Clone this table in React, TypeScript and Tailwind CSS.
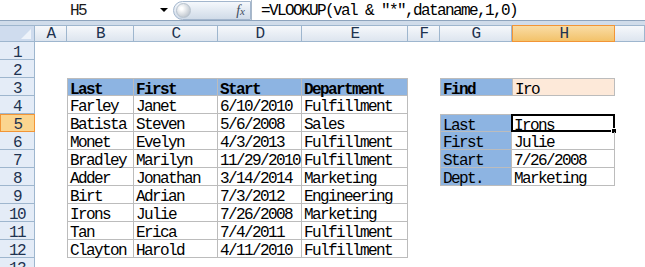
import React from 'react'

const COLS = ['A', 'B', 'C', 'D', 'E', 'F', 'G', 'H', 'I']

const people = [
  ['Farley', 'Janet', '6/10/2010', 'Fulfillment'],
  ['Batista', 'Steven', '5/6/2008', 'Sales'],
  ['Monet', 'Evelyn', '4/3/2013', 'Fulfillment'],
  ['Bradley', 'Marilyn', '11/29/2010', 'Fulfillment'],
  ['Adder', 'Jonathan', '3/14/2014', 'Marketing'],
  ['Birt', 'Adrian', '7/3/2012', 'Engineering'],
  ['Irons', 'Julie', '7/26/2008', 'Marketing'],
  ['Tan', 'Erica', '7/4/2011', 'Fulfillment'],
  ['Clayton', 'Harold', '4/11/2010', 'Fulfillment'],
]

const lookup = [
  ['Last', 'Irons'],
  ['First', 'Julie'],
  ['Start', '7/26/2008'],
  ['Dept.', 'Marketing'],
]

type Cell = { text: string; cls: string; selected?: boolean }

// col: 0 = A ... 8 = I
function cellFor(row: number, col: number): Cell {
  // data table B3:E12
  if (row >= 3 && row <= 12 && col >= 1 && col <= 4) {
    let cls = 'border-r border-b border-[#bcbcbc]'
    if (row === 3) cls += ' border-t bg-[#8db4e2] font-bold'
    if (col === 1) cls += ' border-l'
    const text = row === 3 ? ['Last', 'First', 'Start', 'Department'][col - 1] : people[row - 4][col - 1]
    return { text, cls }
  }
  // find box G3:H3
  if (row === 3 && (col === 6 || col === 7)) {
    return col === 6
      ? { text: 'Find', cls: 'border border-r-0 border-[#bcbcbc] bg-[#8db4e2] font-bold' }
      : { text: 'Iro', cls: 'border border-[#bcbcbc] bg-[#fde9d9]' }
  }
  // result box G5:H8
  if (row >= 5 && row <= 8 && (col === 6 || col === 7)) {
    let cls = 'border-r border-b border-[#bcbcbc]'
    if (row === 5) cls += ' border-t'
    if (col === 6) cls += ' border-l bg-[#8db4e2]'
    return { text: lookup[row - 5][col - 6], cls, selected: row === 5 && col === 7 }
  }
  return { text: '', cls: '' }
}

export default function App() {
  const rows = Array.from({ length: 13 }, (_, i) => i + 1)

  return (
    <div className="w-[645px] h-[267px] overflow-hidden bg-white text-black font-['Liberation_Mono',monospace] text-[16px] tracking-[-1.6px]">
      {/* Formula bar */}
      <div className="flex h-[21px] border-b border-[#8ea4bd] bg-white">
        <div className="flex w-[173px] shrink-0">
          <div className="w-[156px] text-center leading-[15px] pt-[4px] text-[#1b1b1b]">H5</div>
          <div className="flex w-[16px] items-center justify-center">
            <div className="w-0 h-0 border-l-[4px] border-r-[4px] border-t-[4px] border-l-transparent border-r-transparent border-t-black" />
          </div>
        </div>
        <div className="relative mt-[1px] flex h-[19px] w-[78px] shrink-0 items-center justify-end rounded-l-full border border-[#a3b6cd] bg-linear-to-b from-[#f5f8fc] to-[#d0dbe8] pr-[5px]">
          <div className="absolute left-[2px] top-[1px] h-[15px] w-[15px] rounded-full border border-[#b8c3cf] bg-radial-[at_35%_35%] from-white from-10% to-[#a9b3be]" />
          <span className="font-['Liberation_Serif',serif] italic text-[14px] tracking-normal text-[#3e4c5e]">
            f<span className="text-[11px]">x</span>
          </span>
        </div>
        <div className="flex-1 border-l border-[#a9b8c9] pl-[9px] leading-[15px] pt-[4px] whitespace-nowrap">
          =VLOOKUP(val &amp; "*",dataname,1,0)
        </div>
      </div>
      <div className="h-[4px] bg-[#d0dcea]" />

      {/* Sheet */}
      <div className="grid grid-cols-[35px_32px_67px_84px_84px_106px_32px_72px_103px_1fr]">
        {/* Column header row */}
        <div className="relative h-[17px] border-t border-r border-b border-[#9eb6ce] bg-[#cfdcee]">
          <svg className="absolute right-[3px] bottom-[2px]" width="10" height="10" viewBox="0 0 10 10">
            <polygon points="10,0 10,10 0,10" fill="#eef3fa" />
          </svg>
        </div>
        {COLS.map((c) =>
          c === 'H' ? (
            <div
              key={c}
              className="h-[17px] border border-[#f29536] bg-linear-to-b from-[#f9dca4] to-[#f3c269] text-center leading-[15px] pt-[1px] text-[#1e3350]"
            >
              {c}
            </div>
          ) : (
            <div
              key={c}
              className="h-[17px] border-t border-r border-b border-[#9eb6ce] bg-linear-to-b from-[#f6f8fb] to-[#dde5ef] text-center leading-[15px] pt-[1px] text-[#1e3350]"
            >
              {c === 'I' ? '' : c}
            </div>
          )
        )}

        {rows.map((r) => (
          <React.Fragment key={r}>
            {r === 5 ? (
              <div className="h-[18px] border border-[#f29536] bg-[#fbd58f] text-center leading-[15px] pt-[3px] text-[#1e3350]">
                {r}
              </div>
            ) : (
              <div className="h-[18px] border-r border-b border-[#9eb6ce] bg-[#e4ecf7] text-center leading-[15px] pt-[4px] text-[#1e3350]">
                {r}
              </div>
            )}
            {COLS.map((_, ci) => {
              const cell = cellFor(r, ci)
              return (
                <div
                  key={ci}
                  className={`relative h-[18px] whitespace-nowrap pl-[2px] leading-[15px] pt-[4px] ${cell.cls}`}
                >
                  {cell.text}
                  {cell.selected && (
                    <>
                      <div className="absolute -left-[1px] -top-[1px] -right-[1px] -bottom-[1px] border-2 border-black" />
                      <div className="absolute -right-[3px] -bottom-[3px] h-[6px] w-[6px] border border-white bg-black" />
                    </>
                  )}
                </div>
              )
            })}
          </React.Fragment>
        ))}
      </div>
    </div>
  )
}
